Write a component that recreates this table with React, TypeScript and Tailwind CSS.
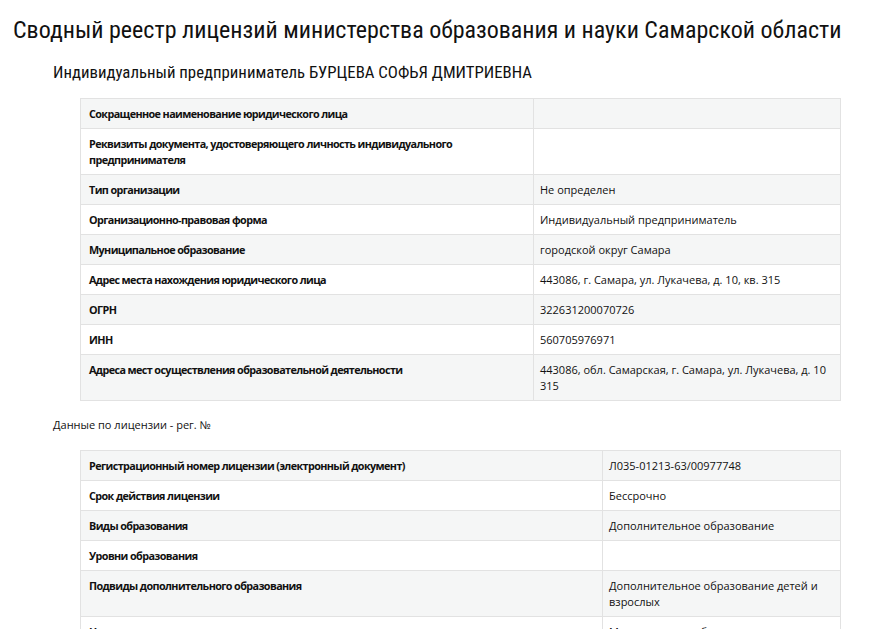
import React from "react";

type Row = { label: string; value: string };

const t1: Row[] = [
  { label: "Сокращенное наименование юридического лица", value: "" },
  { label: "Реквизиты документа, удостоверяющего личность индивидуального предпринимателя", value: "" },
  { label: "Тип организации", value: "Не определен" },
  { label: "Организационно-правовая форма", value: "Индивидуальный предприниматель" },
  { label: "Муниципальное образование", value: "городской округ Самара" },
  { label: "Адрес места нахождения юридического лица", value: "443086, г. Самара, ул. Лукачева, д. 10, кв. 315" },
  { label: "ОГРН", value: "322631200070726" },
  { label: "ИНН", value: "560705976971" },
  { label: "Адреса мест осуществления образовательной деятельности", value: "443086, обл. Самарская, г. Самара, ул. Лукачева, д. 10 315" },
];

const t2: Row[] = [
  { label: "Регистрационный номер лицензии (электронный документ)", value: "Л035-01213-63/00977748" },
  { label: "Срок действия лицензии", value: "Бессрочно" },
  { label: "Виды образования", value: "Дополнительное образование" },
  { label: "Уровни образования", value: "" },
  { label: "Подвиды дополнительного образования", value: "Дополнительное образование детей и взрослых" },
  { label: "Наименование организации", value: "Муниципальное бюджетное учреждение" },
];

function Table({ rows, labelW }: { rows: Row[]; labelW: string }) {
  return (
    <table className="w-[761px] border-collapse text-[11px] leading-4 text-[#111]">
      <tbody>
        {rows.map((r, i) => (
          <tr key={i} className={i % 2 === 0 ? "bg-[#f5f6f6]" : "bg-white"}>
            <td className={`${labelW} border border-[#e2e2e2] px-2 pt-[7px] pb-[6px] align-top text-[10.8px] font-bold tracking-[-0.6px]`}>{r.label}</td>
            <td className="border border-[#e2e2e2] px-[6px] pt-[7px] pb-[6px] align-top">{r.value}</td>
          </tr>
        ))}
      </tbody>
    </table>
  );
}

export default function App() {
  return (
    <div className="h-[629px] overflow-hidden bg-white" style={{ fontFamily: "'Open Sans', sans-serif" }}>
      <h1 className="whitespace-nowrap pl-[13px] pt-[14px] text-[24px] leading-[32px] text-[#111]" style={{ fontFamily: "'Roboto Condensed', Roboto, sans-serif" }}>
        Сводный реестр лицензий министерства образования и науки Самарской области
      </h1>
      <h2 className="whitespace-nowrap pl-[53px] pt-[13px] text-[16.8px] leading-[26px] text-[#111]" style={{ fontFamily: "'Roboto Condensed', Roboto, sans-serif" }}>
        Индивидуальный предприниматель БУРЦЕВА СОФЬЯ ДМИТРИЕВНА
      </h2>
      <div className="pl-[80px] pt-[13px]">
        <Table rows={t1} labelW="w-[453px]" />
      </div>
      <div className="pl-[53px] pt-[16px] text-[11px] leading-4 text-[#111]">Данные по лицензии - рег. №</div>
      <div className="pl-[80px] pt-[17px]">
        <Table rows={t2} labelW="w-[522px]" />
      </div>
    </div>
  );
}
